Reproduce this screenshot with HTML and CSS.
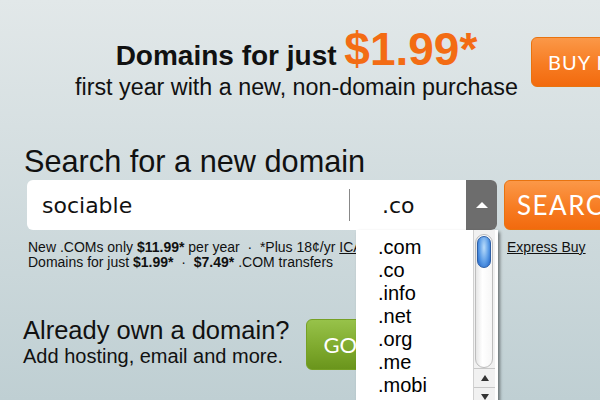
FILE: index.html
```html
<!DOCTYPE html>
<html>

<head>
    <title>Domains</title>
    <link rel="stylesheet" href="styles.css">
</head>

<body>
    <div class="page">
        <section class="promo">
            <div class="promo-text">
                <p class="promo-title">Domains for just <span class="price">$1.99*</span></p>
                <p class="promo-sub">first year with a new, non-domain purchase</p>
            </div>
            <a class="btn btn-orange buy-btn">BUY NOW</a>
        </section>

        <section class="search">
            <h2>Search for a new domain</h2>
            <div class="search-row">
                <div class="search-box">
                    <div class="search-input">sociable</div>
                    <span class="divider"></span>
                    <div class="tld-value">.co</div>
                    <div class="tld-arrow"><span class="tri-up"></span></div>

                    <div class="tld-list">
                        <ul>
                            <li>.com</li>
                            <li>.co</li>
                            <li>.info</li>
                            <li>.net</li>
                            <li>.org</li>
                            <li>.me</li>
                            <li>.mobi</li>
                            <li>.us</li>
                        </ul>
                        <div class="scrollbar">
                            <div class="track"><div class="thumb"></div></div>
                            <div class="arrow-btn"><span class="tri-sm up"></span></div>
                            <div class="arrow-btn"><span class="tri-sm down"></span></div>
                        </div>
                    </div>
                </div>
                <a class="btn btn-orange search-btn">SEARCH</a>
            </div>
            <div class="notes-row">
                <div class="notes">
                    <p>New .COMs only <b>$11.99*</b> per year &nbsp;&middot;&nbsp; *Plus 18¢/yr <u>ICANN fee</u></p>
                    <p>Domains for just <b>$1.99*</b> &nbsp;&middot;&nbsp; <b>$7.49*</b> .COM transfers</p>
                </div>
                <a class="express">Express Buy</a>
            </div>
        </section>

        <section class="own">
            <div class="own-text">
                <h3>Already own a domain?</h3>
                <p>Add hosting, email and more.</p>
            </div>
            <a class="btn btn-green go-btn">GO</a>
        </section>
    </div>
</body>
</html>
```

FILE: styles.css
```css
body {
    margin: 0;
    padding: 0;
    font-family: "Liberation Sans", Arial, sans-serif;
    color: #111;
}

.page {
    width: 600px;
    height: 400px;
    overflow: hidden;
    background: linear-gradient(#e2e8e9, #bfcfd3);
}

p, h2, h3, ul {
    margin: 0;
    padding: 0;
}

/* buttons */
.btn {
    display: flex;
    align-items: center;
    flex-shrink: 0;
    color: #fff;
    font-family: Lato, "Open Sans", sans-serif;
    border-radius: 6px;
    box-sizing: border-box;
}

.btn-orange {
    background: linear-gradient(#fb9848, #f77c22 55%, #f26a0e);
    border: 1px solid #e8730f;
}

.btn-green {
    background: linear-gradient(#97c24a, #7faa2e 55%, #6a951c);
    border: 1px solid #76a025;
}

/* promo */
.promo {
    display: flex;
    align-items: flex-start;
    padding-top: 29px;
    height: 144px;
    box-sizing: border-box;
}

.promo-text {
    flex-shrink: 0;
    margin-left: 75px;
    width: 443px;
    text-align: center;
    white-space: nowrap;
}

.promo-title {
    font-size: 28px;
    font-weight: bold;
    line-height: 40px;
}

.price {
    font-size: 46px;
    color: #f36c14;
}

.promo-sub {
    font-size: 23.3px;
    line-height: 22px;
}

.buy-btn {
    margin-left: 13px;
    margin-top: 8px;
    width: 130px;
    height: 50px;
    padding-left: 16px;
    font-size: 20px;
    letter-spacing: 1px;
}

/* search */
.search {
    padding-left: 24px;
}

.search h2 {
    font-size: 30.7px;
    font-weight: normal;
    line-height: 36px;
}

.search-row {
    display: flex;
    margin-left: 3px;
}

.search-box {
    position: relative;
    flex-shrink: 0;
    display: flex;
    align-items: center;
    width: 470px;
    height: 50px;
    background: #fff;
    border-radius: 6px;
}

.search-input {
    width: 307px;
    padding-left: 15px;
    font-family: "DejaVu Sans", sans-serif;
    font-size: 22px;
    color: #111;
}

.divider {
    width: 1px;
    height: 32px;
    background: #888;
}

.tld-value {
    flex: 1;
    padding-left: 32px;
    font-family: "DejaVu Sans", sans-serif;
    font-size: 22px;
}

.tld-arrow {
    align-self: stretch;
    width: 31px;
    display: flex;
    align-items: center;
    justify-content: center;
    background: #6d6d6d;
    border-radius: 0 6px 6px 0;
}

.tri-up {
    width: 0;
    height: 0;
    border-left: 6px solid transparent;
    border-right: 6px solid transparent;
    border-bottom: 6px solid #fff;
}

.tld-list {
    position: absolute;
    left: 329px;
    top: 50px;
    width: 142px;
    height: 200px;
    background: #fff;
    box-shadow: 2px 2px 3px rgba(0, 0, 0, 0.45);
    z-index: 2;
}

.tld-list ul {
    list-style: none;
    padding: 6px 0 0 22px;
}

.tld-list li {
    font-size: 20px;
    line-height: 23px;
    color: #000;
}

.scrollbar {
    position: absolute;
    top: 0;
    right: 3px;
    bottom: 0;
    width: 22px;
    background: #f1f1f1;
    border-left: 1px solid #d0d0d0;
    box-sizing: border-box;
}

.track {
    height: 134px;
    margin: 4px 2px 0 1px;
    border: 1px solid #bdbdbd;
    border-radius: 10px;
    background: linear-gradient(90deg, #e6e6e6, #fff 40%, #f6f6f6);
    box-sizing: border-box;
}

.thumb {
    height: 32px;
    margin: 1px;
    border-radius: 8px;
    background: radial-gradient(ellipse at 50% 35%, #b9dcfb, #5a9be6 55%, #1b5fc4);
    border: 1px solid #2d5fa6;
    box-sizing: border-box;
}

.arrow-btn {
    height: 18px;
    display: flex;
    align-items: center;
    justify-content: center;
    border-top: 1px solid #c8c8c8;
}

.arrow-btn:first-of-type {
    margin-top: 4px;
}

.tri-sm {
    width: 0;
    height: 0;
    border-left: 4px solid transparent;
    border-right: 4px solid transparent;
}

.tri-sm.up {
    border-bottom: 6px solid #333;
}

.tri-sm.down {
    border-top: 6px solid #333;
}

.search-btn {
    margin-left: 7px;
    width: 110px;
    height: 50px;
    padding-left: 12px;
    font-size: 26px;
    letter-spacing: 1.5px;
}

.notes-row {
    display: flex;
    margin-top: 10px;
}

.notes {
    width: 332px;
    padding-left: 4px;
    box-sizing: border-box;
    font-size: 14px;
    line-height: 15px;
    white-space: nowrap;
    overflow: hidden;
}

.express {
    margin-left: 151px;
    font-size: 14px;
    line-height: 15px;
    color: #111;
    text-decoration: underline;
}

/* already own */
.own {
    display: flex;
    align-items: flex-start;
    margin-top: 46px;
    padding-left: 23px;
}

.own h3 {
    font-size: 25.5px;
    font-weight: normal;
    line-height: 28px;
}

.own p {
    font-size: 20px;
    line-height: 25px;
}

.go-btn {
    margin-left: 16px;
    margin-top: 3px;
    width: 80px;
    height: 51px;
    padding-left: 17px;
    font-size: 22px;
}
```
